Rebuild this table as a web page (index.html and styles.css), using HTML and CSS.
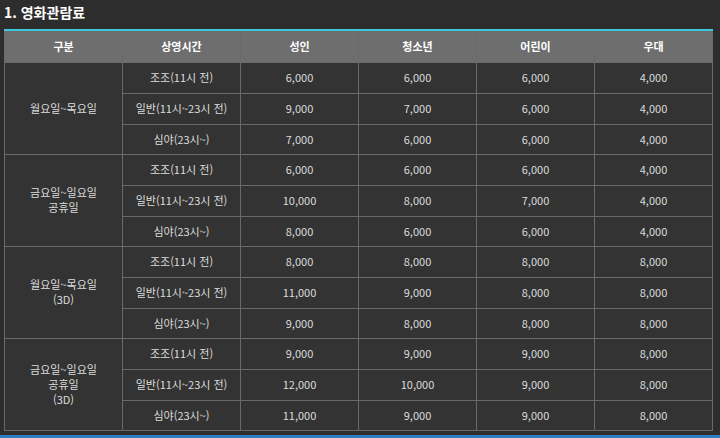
FILE: index.html
```html
<!DOCTYPE html>
<html lang="ko">
<head>
    <meta charset="UTF-8">
    <meta name="viewport" content="width=device-width, initial-scale=1.0">
    <title>영화관람료</title>
    <link rel="stylesheet" href="styles.css">
</head>
<body>
<h2 class="title">1. 영화관람료</h2>

<table class="price">
    <thead>
    <tr>
        <th>구분</th>
        <th>상영시간</th>
        <th>성인</th>
        <th>청소년</th>
        <th>어린이</th>
        <th>우대</th>
    </tr>
    </thead>
    <tbody>
    <tr>
        <td rowspan="3">월요일~목요일</td>
        <td>조조(11시 전)</td><td>6,000</td><td>6,000</td><td>6,000</td><td>4,000</td>
    </tr>
    <tr>
        <td>일반(11시~23시 전)</td><td>9,000</td><td>7,000</td><td>6,000</td><td>4,000</td>
    </tr>
    <tr>
        <td>심야(23시~)</td><td>7,000</td><td>6,000</td><td>6,000</td><td>4,000</td>
    </tr>
    <tr>
        <td rowspan="3">금요일~일요일<br>공휴일</td>
        <td>조조(11시 전)</td><td>6,000</td><td>6,000</td><td>6,000</td><td>4,000</td>
    </tr>
    <tr>
        <td>일반(11시~23시 전)</td><td>10,000</td><td>8,000</td><td>7,000</td><td>4,000</td>
    </tr>
    <tr>
        <td>심야(23시~)</td><td>8,000</td><td>6,000</td><td>6,000</td><td>4,000</td>
    </tr>
    <tr>
        <td rowspan="3">월요일~목요일<br>(3D)</td>
        <td>조조(11시 전)</td><td>8,000</td><td>8,000</td><td>8,000</td><td>8,000</td>
    </tr>
    <tr>
        <td>일반(11시~23시 전)</td><td>11,000</td><td>9,000</td><td>8,000</td><td>8,000</td>
    </tr>
    <tr>
        <td>심야(23시~)</td><td>9,000</td><td>8,000</td><td>8,000</td><td>8,000</td>
    </tr>
    <tr>
        <td rowspan="3">금요일~일요일<br>공휴일<br>(3D)</td>
        <td>조조(11시 전)</td><td>9,000</td><td>9,000</td><td>9,000</td><td>8,000</td>
    </tr>
    <tr>
        <td>일반(11시~23시 전)</td><td>12,000</td><td>10,000</td><td>9,000</td><td>8,000</td>
    </tr>
    <tr>
        <td>심야(23시~)</td><td>11,000</td><td>9,000</td><td>9,000</td><td>8,000</td>
    </tr>
    </tbody>
</table>

<div class="bottom-bar"></div>
</body>
</html>
```

FILE: styles.css
```css
body {
    margin: 0;
    background-color: #2d2d2d;
    font-family: "Noto Sans CJK KR", "Noto Sans", sans-serif;
    color: #dcdcdc;
}
.title {
    margin: 0;
    padding: 2px 0 0 4px;
    height: 29px;
    box-sizing: border-box;
    font-size: 14px;
    font-weight: bold;
    color: #ffffff;
    line-height: 20px;
}
.price {
    margin-left: 4px;
    width: 709px;
    border-collapse: collapse;
    border-top: 2px solid #3ec8dc;
    table-layout: fixed;
    font-size: 11px;
}
.price th, .price td {
    border: 1px solid #6a6a6a;
    text-align: center;
    padding: 0;
    line-height: 15px;
}
.price thead tr {
    height: 32px;
}
.price th {
    background-color: #6e6e6e;
    color: #ffffff;
    font-weight: bold;
    border-top: none;
}
.price tbody tr {
    height: 31px;
}
.price tbody tr:nth-child(3n) {
    height: 30px;
}
.price td {
    background-color: #333333;
}
.bottom-bar {
    margin-top: 4px;
    height: 3px;
    background-color: #2c7fbf;
}
```
